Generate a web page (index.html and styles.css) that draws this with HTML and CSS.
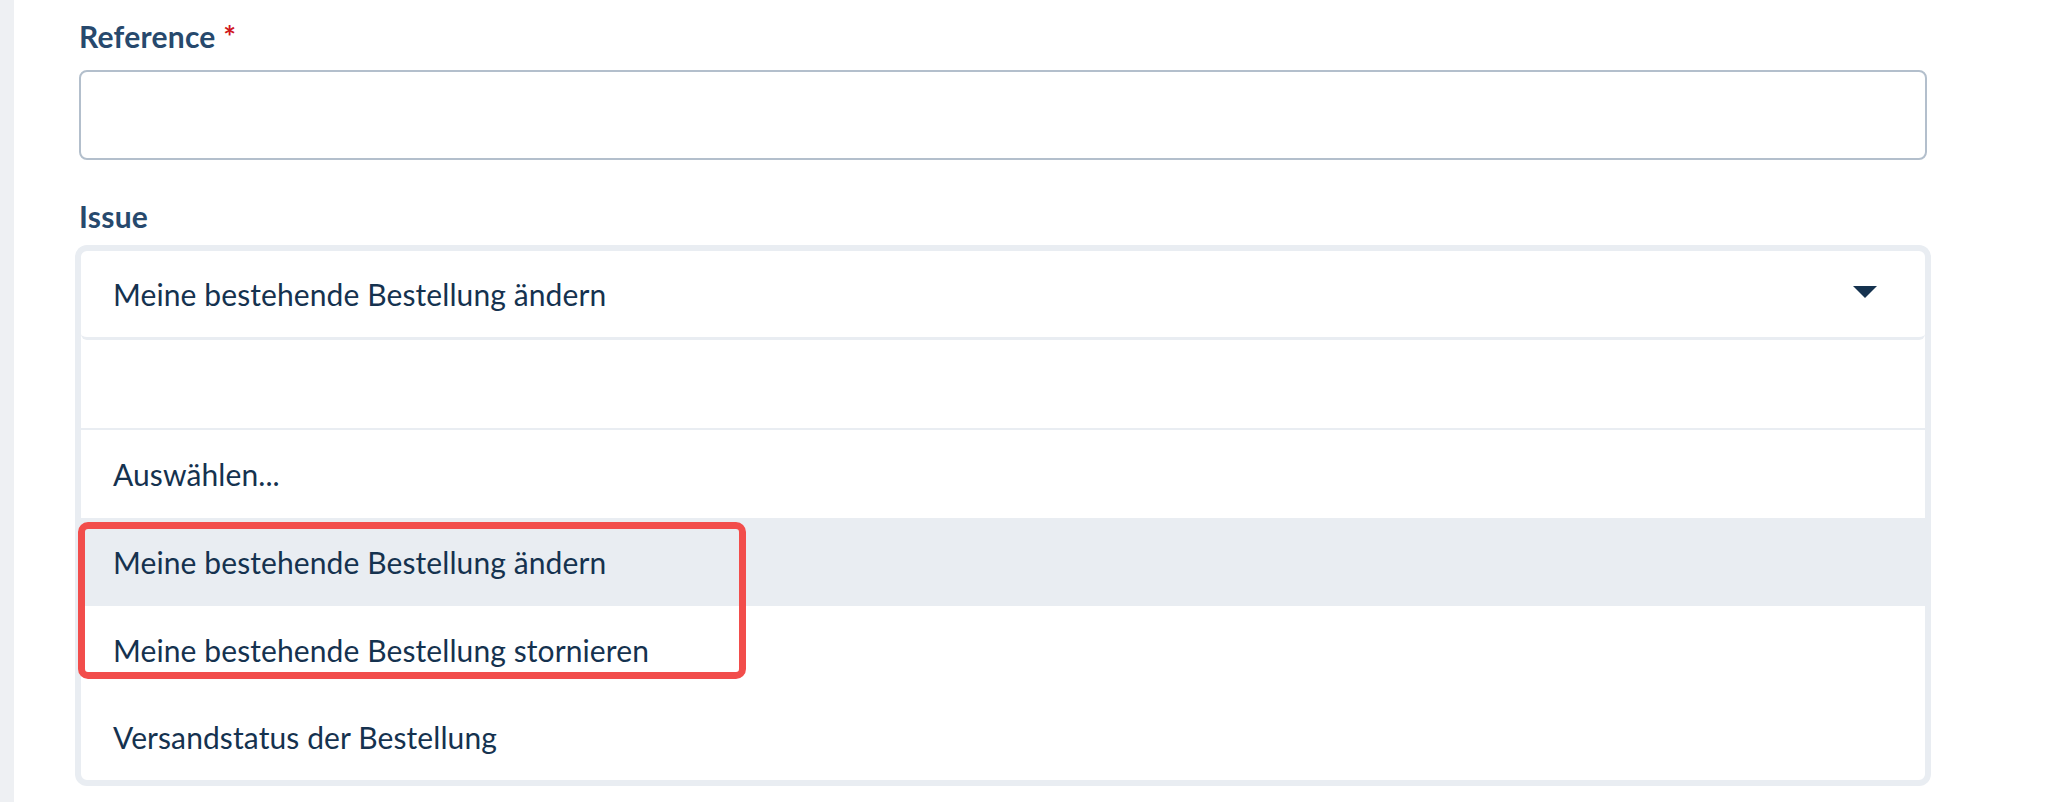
FILE: index.html
```html
<!DOCTYPE html>
<html lang="de">
<head>
<meta charset="utf-8">
<title>Form</title>
<link rel="stylesheet" href="styles.css">
</head>
<body>
<div class="page">
  <div class="strip"></div>
  <main class="content">
    <label class="label">Reference <span class="req">*</span></label>
    <div class="input"></div>
    <label class="label label-issue">Issue</label>
    <div class="select">
      <div class="select-head">
        <span class="opt-text">Meine bestehende Bestellung ändern</span>
        <svg class="caret" width="24" height="12" viewBox="0 0 24 12"><path d="M0 0 H24 L12 12 Z" fill="#15324f"/></svg>
      </div>
      <div class="search"></div>
      <ul class="options">
        <li class="option">Auswählen...</li>
        <li class="option active">Meine bestehende Bestellung ändern</li>
        <li class="option">Meine bestehende Bestellung stornieren</li>
        <li class="option last">Versandstatus der Bestellung</li>
      </ul>
      <div class="highlight-box"></div>
    </div>
  </main>
</div>
</body>
</html>
```
FILE: styles.css
```css
html, body {
  margin: 0;
  padding: 0;
  background: #ffffff;
}
body {
  font-family: "Lato", "Noto Sans", sans-serif;
  color: #15324f;
}
.page {
  display: flex;
  min-height: 802px;
}
.strip {
  width: 14px;
  flex: 0 0 14px;
  background: #eef0f3;
}
.content {
  flex: 0 0 1848px;
  padding: 18px 0 0 65px;
  display: flex;
  flex-direction: column;
}
.label {
  display: block;
  font-size: 30px;
  line-height: 36px;
  font-weight: 700;
  letter-spacing: 0.25px;
  color: #27496d;
}
.req {
  color: #d0191f;
}
.input {
  margin-top: 16px;
  height: 86px;
  border: 2px solid #b3bfcc;
  border-radius: 8px;
}
.label-issue {
  margin-top: 38px;
}
.select {
  position: relative;
  margin-top: 15px;
  border: 2px solid #e9edf2;
  box-shadow: 0 0 0 4px #e9edf2;
  border-radius: 8px;
  background: #fff;
}
.select-head {
  height: 86px;
  border-bottom: 3px solid #e9edf2;
  border-radius: 6px;
  display: flex;
  align-items: center;
  justify-content: space-between;
  padding: 0 48px 0 32px;
}
.opt-text, .option {
  font-size: 30px;
  letter-spacing: 0.1px;
  color: #15324f;
}
.caret {
  display: block;
  margin-top: -4px;
}
.search {
  height: 88px;
  border-bottom: 2px solid #e9edf2;
}
.options {
  list-style: none;
  margin: 0;
  padding: 0;
}
.option {
  height: 88px;
  display: flex;
  align-items: center;
  padding-left: 32px;
}
.option.last {
  height: 86px;
}
.option.active {
  background: #e9edf2;
}
.highlight-box {
  position: absolute;
  left: -3px;
  top: 271px;
  width: 654px;
  height: 143px;
  border: 7px solid #f24d4b;
  border-radius: 10px;
}
```
